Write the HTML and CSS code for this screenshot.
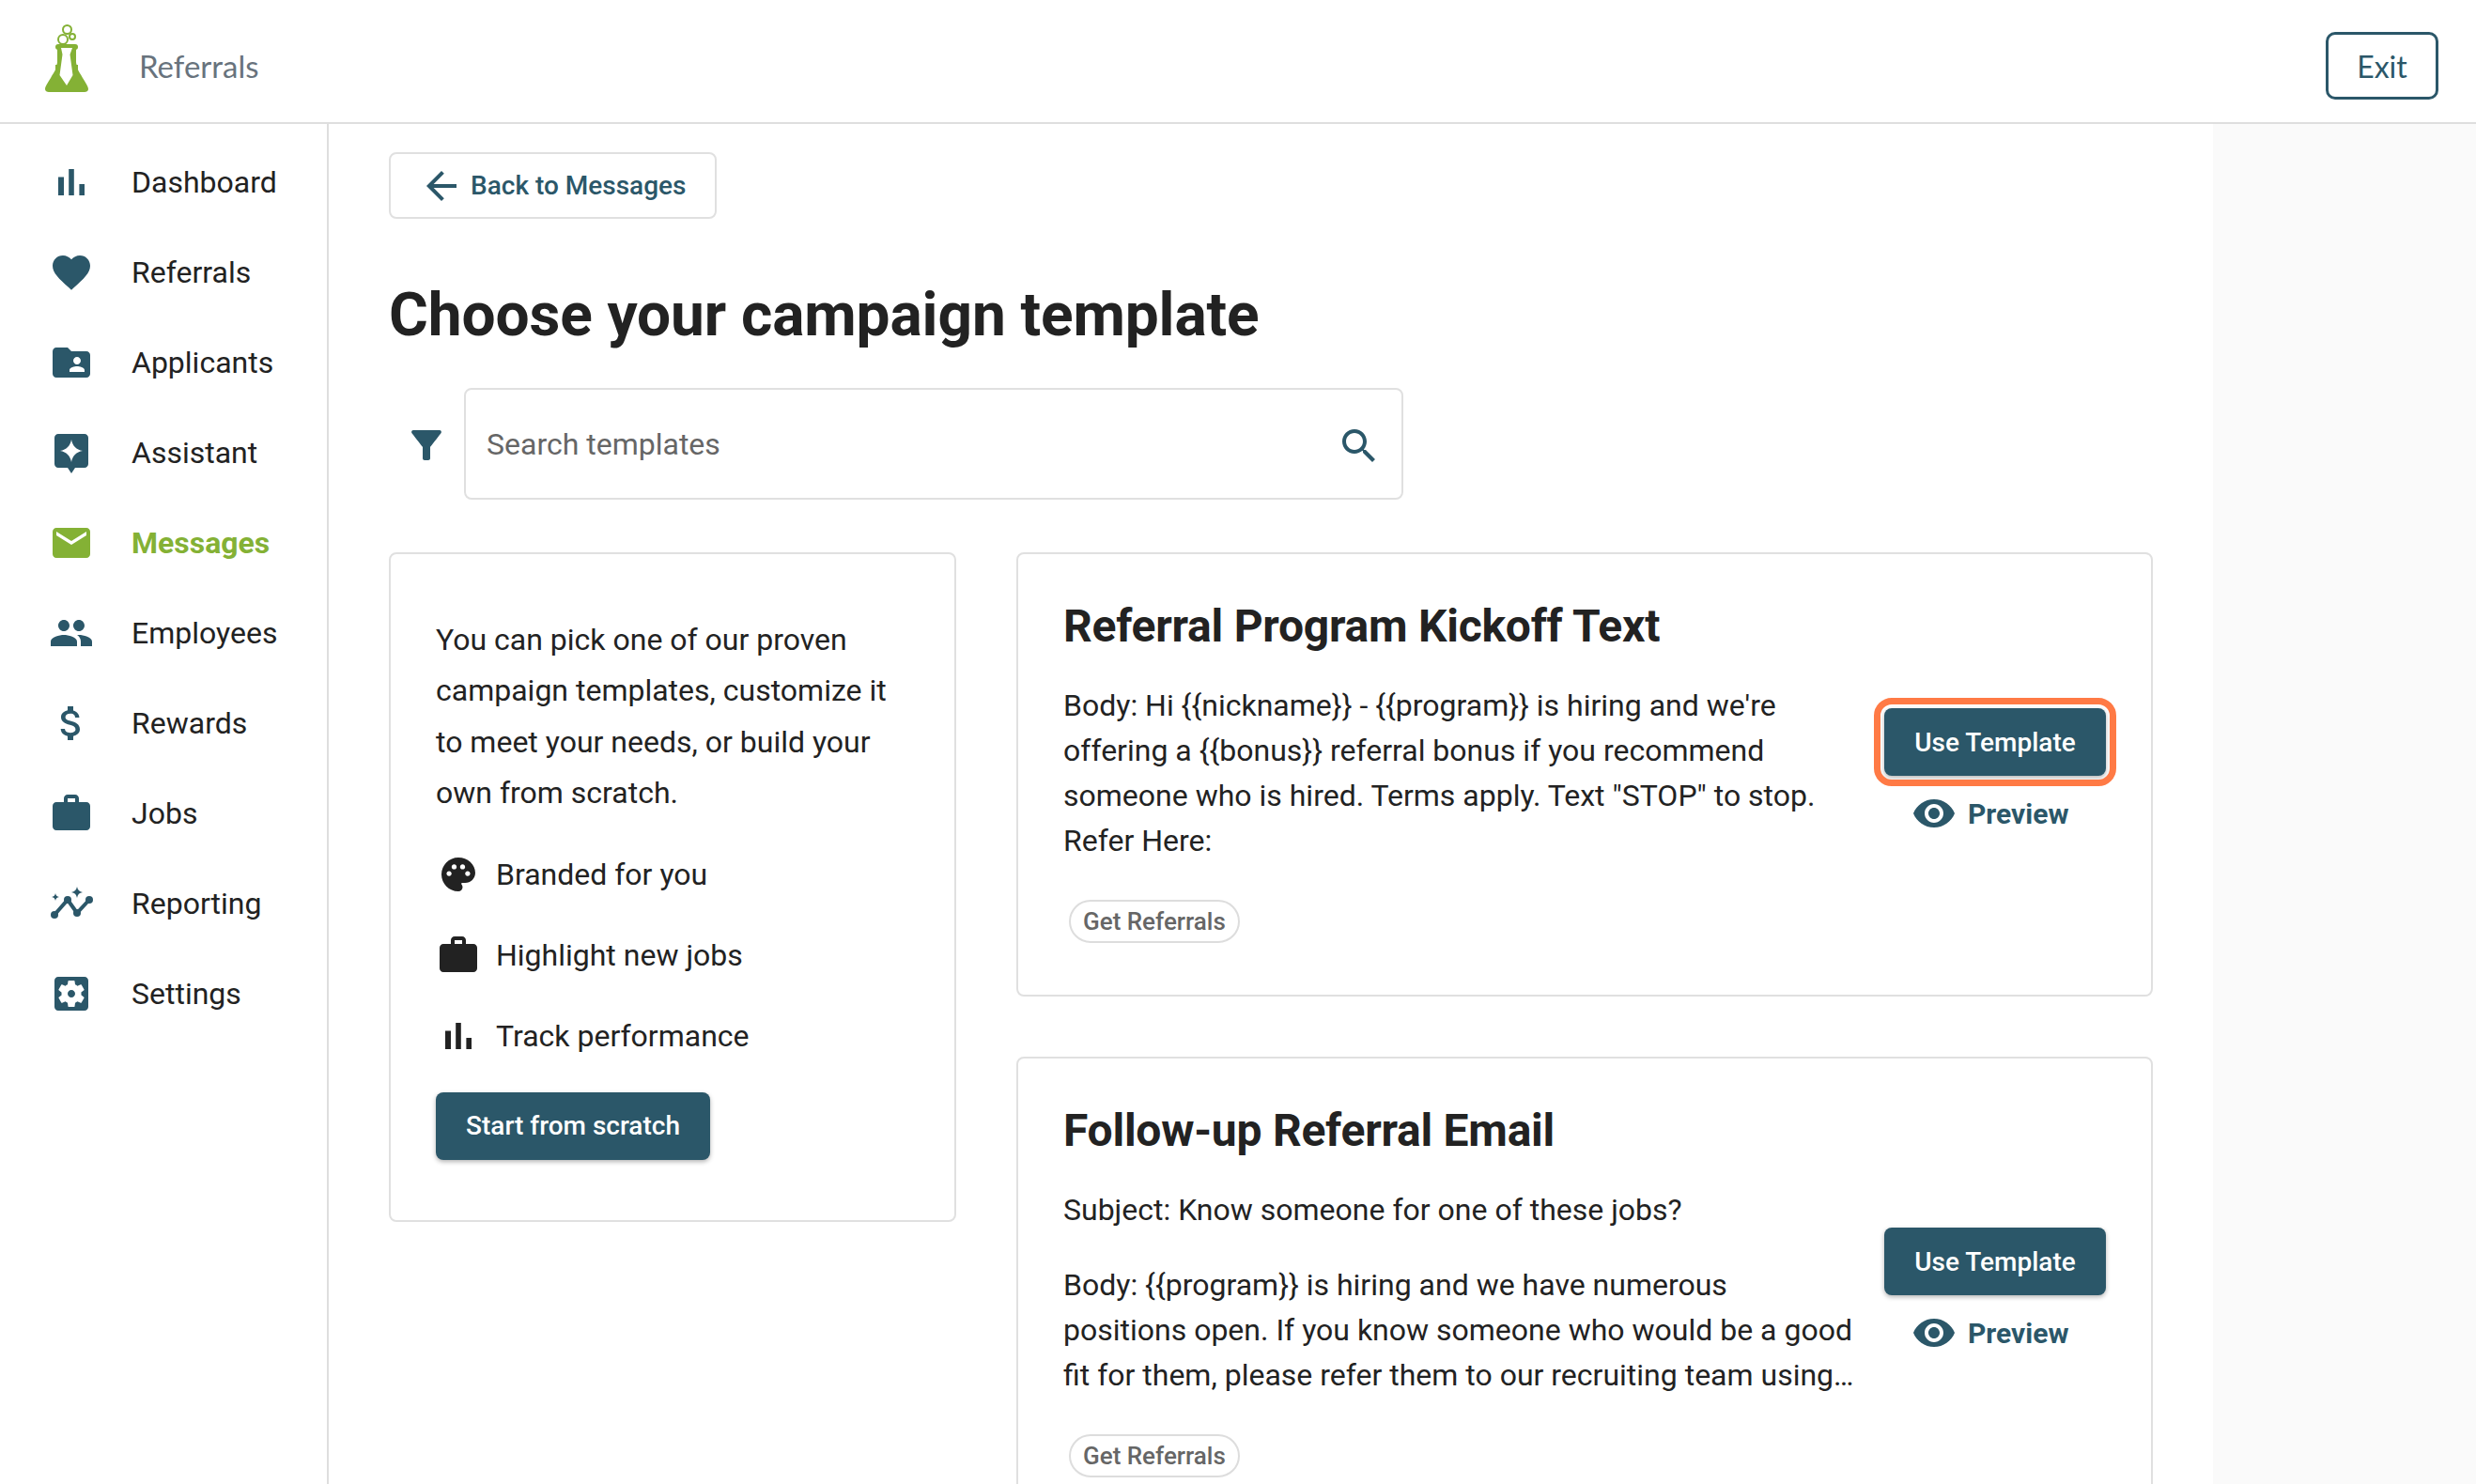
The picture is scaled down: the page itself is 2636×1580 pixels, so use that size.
FILE: index.html
```html
<!DOCTYPE html>
<html>
<head>
    <title>Choose your campaign template</title>
    <meta name="viewport" content="width=device-width" />
    <link rel="stylesheet" href="styles.css">
</head>
<body>

<header class="topbar">
    <div class="brand">
        <svg class="logo" viewBox="0 0 46 72" width="46" height="72">
            <path class="logo-flask" d="M11 43h24v5c0 1 3 5 5 9 3 5 6 9 6 12 0 2-2 3-4 3H4c-2 0-4-1-4-3 0-3 3-7 6-12 2-4 5-8 5-9z"/>
            <path class="logo-flask" d="M13 22h20v18c0 2 1 4 2 6H11c1-2 2-4 2-6z"/>
            <rect class="logo-flask" x="11" y="21" width="24" height="6" rx="3"/>
            <path class="logo-tie" d="M17 25h12l-2.500 7 3 22L23 65l-7.500-11 3-22z"/>
            <circle class="logo-bubble" cx="23.500" cy="5.500" r="4.500"/>
            <circle class="logo-bubble" cx="19" cy="16" r="5"/>
            <circle class="logo-bubble" cx="29" cy="13" r="3"/>
        </svg>
        <span class="brand-name">Referrals</span>
    </div>
    <a class="exit-btn">Exit</a>
</header>

<div class="shell">
    <nav class="sidebar">
        <a class="nav-item">
            <svg class="icon" viewBox="0 0 24 24"><path d="M5 9.200h3V19H5zM10.600 5h2.800v14h-2.800zm5.600 8H19v6h-2.800z"/></svg>
            Dashboard
        </a>
        <a class="nav-item">
            <svg class="icon" viewBox="0 0 24 24"><path d="M12 21.350l-1.450-1.320C5.400 15.360 2 12.280 2 8.500 2 5.420 4.420 3 7.500 3c1.740 0 3.410.81 4.500 2.090C13.090 3.810 14.760 3 16.500 3 19.580 3 22 5.420 22 8.500c0 3.780-3.400 6.860-8.550 11.540L12 21.350z"/></svg>
            Referrals
        </a>
        <a class="nav-item">
            <svg class="icon" viewBox="0 0 24 24"><path d="M20 6h-8l-2-2H4c-1.100 0-1.990.9-1.990 2L2 18c0 1.100.9 2 2 2h16c1.100 0 2-.9 2-2V8c0-1.100-.9-2-2-2zm-5 3c1.100 0 2 .9 2 2s-.9 2-2 2-2-.9-2-2 .9-2 2-2zm4 8h-8v-1c0-1.330 2.670-2 4-2s4 .67 4 2v1z"/></svg>
            Applicants
        </a>
        <a class="nav-item">
            <svg class="icon" viewBox="0 0 24 24"><path fill-rule="evenodd" d="M19 2H5c-1.100 0-2 .9-2 2v14c0 1.100.9 2 2 2h5l2 3 2-3h5c1.100 0 2-.9 2-2V4c0-1.100-.9-2-2-2zM12 5c.6 3.400 2.600 5.400 6 6-3.400.6-5.400 2.600-6 6-.6-3.400-2.600-5.400-6-6 3.400-.6 5.400-2.600 6-6z"/></svg>
            Assistant
        </a>
        <a class="nav-item active">
            <svg class="icon" viewBox="0 0 24 24"><path d="M20 4H4c-1.100 0-1.990.9-1.990 2L2 18c0 1.100.9 2 2 2h16c1.100 0 2-.9 2-2V6c0-1.100-.9-2-2-2zm0 4l-8 5-8-5V6l8 5 8-5v2z"/></svg>
            Messages
        </a>
        <a class="nav-item">
            <svg class="icon" viewBox="0 0 24 24"><path d="M16 11c1.660 0 2.990-1.340 2.990-3S17.660 5 16 5c-1.660 0-3 1.340-3 3s1.340 3 3 3zm-8 0c1.660 0 2.990-1.340 2.990-3S9.660 5 8 5C6.340 5 5 6.340 5 8s1.340 3 3 3zm0 2c-2.330 0-7 1.170-7 3.500V19h14v-2.500c0-2.330-4.670-3.500-7-3.500zm8 0c-.29 0-.62.02-.97.05 1.160.84 1.970 1.970 1.970 3.450V19h6v-2.500c0-2.330-4.670-3.500-7-3.500z"/></svg>
            Employees
        </a>
        <a class="nav-item">
            <svg class="icon" viewBox="0 0 24 24"><path d="M11.800 10.900c-2.270-.59-3-1.200-3-2.150 0-1.090 1.010-1.850 2.700-1.850 1.780 0 2.440.85 2.500 2.100h2.210c-.07-1.720-1.120-3.300-3.210-3.810V3h-3v2.160c-1.940.42-3.500 1.680-3.500 3.610 0 2.310 1.910 3.460 4.700 4.130 2.500.6 3 1.480 3 2.410 0 .69-.49 1.790-2.700 1.790-2.060 0-2.870-.92-2.980-2.100h-2.200c.12 2.190 1.760 3.420 3.680 3.830V21h3v-2.150c1.950-.37 3.500-1.500 3.500-3.550 0-2.840-2.430-3.810-4.700-4.400z"/></svg>
            Rewards
        </a>
        <a class="nav-item">
            <svg class="icon" viewBox="0 0 24 24"><path d="M20 6h-4V4c0-1.110-.89-2-2-2h-4c-1.110 0-2 .89-2 2v2H4c-1.110 0-1.990.89-1.990 2L2 19c0 1.110.89 2 2 2h16c1.110 0 2-.89 2-2V8c0-1.110-.89-2-2-2zm-6 0h-4V4h4v2z"/></svg>
            Jobs
        </a>
        <a class="nav-item">
            <svg class="icon" viewBox="0 0 48 48">
                <path class="trend" d="M6 36l14-16 10 14 13-14"/>
                <circle cx="6" cy="36" r="4"/><circle cx="20" cy="20" r="4"/><circle cx="30" cy="34" r="4"/><circle cx="43" cy="20" r="4"/>
                <path d="M30 6c.6 3.600 2.400 5.400 6 6-3.600.6-5.400 2.400-6 6-.6-3.600-2.400-5.400-6-6 3.600-.6 5.400-2.400 6-6zM7 13c.4 2.400 1.600 3.600 4 4-2.400.4-3.600 1.600-4 4-.4-2.400-1.600-3.600-4-4 2.400-.4 3.600-1.600 4-4z"/>
            </svg>
            Reporting
        </a>
        <a class="nav-item">
            <svg class="icon" viewBox="0 0 24 24"><path d="M12 10c-1.100 0-2 .9-2 2s.9 2 2 2 2-.9 2-2-.9-2-2-2zm7-7H5c-1.110 0-2 .9-2 2v14c0 1.100.89 2 2 2h14c1.110 0 2-.9 2-2V5c0-1.100-.89-2-2-2zm-1.750 9c0 .23-.02.46-.05.68l1.480 1.160c.13.11.17.3.08.45l-1.400 2.420c-.09.15-.27.21-.43.15l-1.740-.7c-.36.28-.76.51-1.180.69l-.26 1.850c-.03.17-.18.3-.35.3h-2.800c-.17 0-.32-.13-.35-.29l-.26-1.850c-.43-.18-.82-.41-1.180-.69l-1.740.7c-.16.06-.34 0-.43-.15l-1.400-2.420c-.09-.15-.05-.34.08-.45l1.480-1.160c-.03-.23-.05-.46-.05-.69 0-.23.02-.46.05-.68l-1.480-1.160c-.13-.11-.17-.3-.08-.45l1.400-2.420c.09-.15.27-.21.43-.15l1.740.7c.36-.28.76-.51 1.180-.69l.26-1.850c.03-.17.18-.3.35-.3h2.800c.17 0 .32.13.35.29l.26 1.850c.43.18.82.41 1.180.69l1.740-.7c.16-.06.34 0 .43.15l1.400 2.420c.09.15.05.34-.08.45l-1.480 1.160c.03.23.05.46.05.69z"/></svg>
            Settings
        </a>
    </nav>

    <main class="main">
        <a class="back-btn">
            <svg class="icon" viewBox="0 0 24 24"><path d="M20 11H7.830l5.590-5.590L12 4l-8 8 8 8 1.410-1.410L7.830 13H20v-2z"/></svg>
            Back to Messages
        </a>

        <h1 class="page-title">Choose your campaign template</h1>

        <div class="search-row">
            <svg class="icon filter-icon" viewBox="0 0 24 24"><path d="M4.250 5.610C6.270 8.200 10 13 10 13v6c0 .55.45 1 1 1h2c.55 0 1-.45 1-1v-6s3.720-4.800 5.740-7.390c.51-.66.04-1.610-.79-1.610H5.040c-.83 0-1.300.95-.79 1.610z"/></svg>
            <div class="search-box">
                <input class="search-input" placeholder="Search templates">
                <svg class="icon search-icon" viewBox="0 0 24 24"><path d="M15.500 14h-.79l-.28-.27C15.410 12.590 16 11.110 16 9.500 16 5.910 13.090 3 9.500 3S3 5.910 3 9.500 5.910 16 9.500 16c1.610 0 3.090-.59 4.230-1.570l.27.28v.79l5 4.990L20.490 19l-4.990-5zm-6 0C7.010 14 5 11.990 5 9.500S7.010 5 9.500 5 14 7.010 14 9.500 11.990 14 9.500 14z"/></svg>
            </div>
        </div>

        <div class="columns">
            <section class="card intro">
                <p class="intro-text">You can pick one of our proven campaign templates, customize it to meet your needs, or build your own from scratch.</p>
                <ul class="perks">
                    <li>
                        <svg class="icon" viewBox="-1.330 -1.330 26.670 26.670"><path d="M12 2C6.490 2 2 6.490 2 12s4.490 10 10 10c1.380 0 2.500-1.120 2.500-2.500 0-.61-.23-1.200-.64-1.670-.08-.1-.13-.21-.13-.33 0-.28.22-.5.5-.5H16c3.310 0 6-2.690 6-6 0-4.960-4.490-9-10-9zm5.500 11c-.83 0-1.500-.67-1.500-1.500s.67-1.500 1.500-1.500 1.500.67 1.500 1.500-.67 1.500-1.500 1.500zm-3-4c-.83 0-1.500-.67-1.500-1.500S13.670 6 14.500 6s1.500.67 1.500 1.500S15.330 9 14.500 9zM5 11.500c0-.83.67-1.500 1.500-1.500s1.500.67 1.500 1.500S7.330 13 6.500 13 5 12.330 5 11.500zm6-4c0 .83-.67 1.500-1.500 1.500S8 8.330 8 7.500 8.670 6 9.500 6s1.500.67 1.500 1.500z"/></svg>
                        Branded for you
                    </li>
                    <li>
                        <svg class="icon" viewBox="0 0 24 24"><path d="M20 6h-4V4c0-1.110-.89-2-2-2h-4c-1.110 0-2 .89-2 2v2H4c-1.110 0-1.990.89-1.990 2L2 19c0 1.110.89 2 2 2h16c1.110 0 2-.89 2-2V8c0-1.110-.89-2-2-2zm-6 0h-4V4h4v2z"/></svg>
                        Highlight new jobs
                    </li>
                    <li>
                        <svg class="icon" viewBox="0 0 24 24"><path d="M5 9.200h3V19H5zM10.600 5h2.800v14h-2.800zm5.600 8H19v6h-2.800z"/></svg>
                        Track performance
                    </li>
                </ul>
                <a class="btn start-btn">Start from scratch</a>
            </section>

            <div class="templates">
                <article class="card template">
                    <h2 class="template-title">Referral Program Kickoff Text</h2>
                    <div class="template-row">
                        <div class="template-body">
                            <p>Body: Hi {{nickname}} - {{program}} is hiring and we're offering a {{bonus}} referral bonus if you recommend someone who is hired. Terms apply. Text "STOP" to stop. Refer Here:</p>
                        </div>
                        <div class="template-actions">
                            <a class="btn use-btn focused">Use Template</a>
                            <a class="preview">
                                <svg class="icon" viewBox="0 0 24 24"><path d="M12 4.500C7 4.500 2.730 7.610 1 12c1.730 4.390 6 7.500 11 7.500s9.270-3.110 11-7.500c-1.730-4.390-6-7.500-11-7.500zM12 17c-2.760 0-5-2.240-5-5s2.240-5 5-5 5 2.240 5 5-2.240 5-5 5zm0-8c-1.660 0-3 1.340-3 3s1.340 3 3 3 3-1.340 3-3-1.340-3-3-3z"/></svg>
                                Preview
                            </a>
                        </div>
                    </div>
                    <span class="tag">Get Referrals</span>
                </article>

                <article class="card template">
                    <h2 class="template-title">Follow-up Referral Email</h2>
                    <div class="template-row">
                        <div class="template-body">
                            <p>Subject: Know someone for one of these jobs?</p>
                            <p>Body: {{program}} is hiring and we have numerous positions open. If you know someone who would be a good fit for them, please refer them to our recruiting team using…</p>
                        </div>
                        <div class="template-actions">
                            <a class="btn use-btn">Use Template</a>
                            <a class="preview">
                                <svg class="icon" viewBox="0 0 24 24"><path d="M12 4.500C7 4.500 2.730 7.610 1 12c1.730 4.390 6 7.500 11 7.500s9.270-3.110 11-7.500c-1.730-4.390-6-7.500-11-7.500zM12 17c-2.760 0-5-2.240-5-5s2.240-5 5-5 5 2.240 5 5-2.240 5-5 5zm0-8c-1.660 0-3 1.340-3 3s1.340 3 3 3 3-1.340 3-3-1.340-3-3-3z"/></svg>
                                Preview
                            </a>
                        </div>
                    </div>
                    <span class="tag">Get Referrals</span>
                </article>
            </div>
        </div>
    </main>

    <aside class="side-panel"></aside>
</div>

</body>
</html>
```

FILE: styles.css
```css
body, html {
    margin: 0;
    height: 100%;
    overflow: hidden;
    font-family: Roboto, sans-serif;
    color: #222;
    background: #fff;
}

.icon {
    width: 48px;
    height: 48px;
    flex: none;
    fill: currentColor;
}

/* top bar */

.topbar {
    height: 130px;
    box-sizing: content-box;
    border-bottom: 2px solid #dedede;
    display: flex;
    align-items: center;
    justify-content: space-between;
    padding: 0 40px 0 48px;
}

.brand {
    display: flex;
    align-items: center;
    gap: 54px;
    padding-top: 10px;
    font-family: Lato, sans-serif;
}

.logo {
    margin-bottom: 16px;
}
.logo-flask {
    fill: #84b135;
}
.logo-tie {
    fill: #fff;
}
.logo-bubble {
    fill: #fff;
    stroke: #84b135;
    stroke-width: 2px;
}

.brand-name {
    font-size: 33px;
    color: #68737d;
}

.exit-btn {
    width: 120px;
    height: 72px;
    margin-top: 10px;
    box-sizing: border-box;
    border: 3px solid #2b5769;
    border-radius: 10px;
    display: flex;
    align-items: center;
    justify-content: center;
    font-family: Lato, sans-serif;
    font-size: 32px;
    color: #2b5769;
}

/* page columns */

.shell {
    display: flex;
    height: calc(100% - 132px);
}

.sidebar {
    width: 348px;
    flex: none;
    border-right: 2px solid #dedede;
    padding-top: 14px;
}

.nav-item {
    height: 96px;
    display: flex;
    align-items: center;
    gap: 40px;
    padding-left: 52px;
    font-size: 32px;
    color: #222;
}
.nav-item .icon {
    color: #2b5769;
}
.trend {
    fill: none;
    stroke: currentColor;
    stroke-width: 4px;
}
.nav-item.active, .nav-item.active .icon {
    color: #84b135;
    font-weight: 700;
}

.main {
    flex: 1;
    padding: 30px 64px 0;
}

.side-panel {
    width: 280px;
    flex: none;
    background: #fafafa;
}

/* heading and search */

.back-btn {
    width: 349px;
    height: 71px;
    box-sizing: border-box;
    border: 2px solid #e0e0e0;
    border-radius: 8px;
    display: flex;
    align-items: center;
    gap: 7px;
    padding-left: 30px;
    font-size: 28px;
    font-weight: 500;
    color: #2b5769;
}

.page-title {
    margin: 65px 0 0;
    font-size: 64px;
    line-height: 75px;
    font-weight: 700;
    letter-spacing: -.12px;
    color: #222;
}

.search-row {
    display: flex;
    align-items: center;
    gap: 16px;
    margin: 40px 0 0 16px;
    color: #2b5769;
}

.filter-icon {
    margin-top: 3px;
}

.search-box {
    width: 1000px;
    height: 119px;
    box-sizing: border-box;
    border: 2px solid #e0e0e0;
    border-radius: 8px;
    display: flex;
    align-items: center;
    padding: 0 21px 0 22px;
}

.search-input {
    flex: 1;
    border: 0;
    outline: 0;
    padding: 0;
    font-family: Roboto, sans-serif;
    font-size: 32px;
    color: #222;
}
.search-input::placeholder {
    color: #666;
    opacity: 1;
}

.search-icon {
    margin-top: 5px;
}

/* cards */

.columns {
    display: grid;
    grid-template-columns: 604px 1210px;
    gap: 64px;
    align-items: start;
    margin-top: 56px;
}

.card {
    box-sizing: border-box;
    border: 2px solid #e0e0e0;
    border-radius: 8px;
    background: #fff;
}

.intro {
    padding: 64px 48px 64px;
}

.intro-text {
    margin: 0;
    font-size: 32px;
    line-height: 54.400px;
}

.perks {
    list-style: none;
    margin: 16px 0 0;
    padding: 0;
}
.perks li {
    height: 86px;
    display: flex;
    align-items: center;
    gap: 16px;
    font-size: 32px;
}

.btn {
    display: flex;
    align-items: center;
    justify-content: center;
    height: 72px;
    border-radius: 8px;
    background: #2b5769;
    color: #fff;
    font-size: 28px;
    font-weight: 500;
    box-shadow: 0 2px 5px rgba(0, 0, 0, .3);
}

.start-btn {
    width: 292px;
    margin-top: 17px;
}

.templates {
    display: flex;
    flex-direction: column;
    gap: 64px;
}

.template {
    padding: 48px 48px 55px;
}

.template-title {
    margin: 1px 0 0;
    font-size: 48px;
    line-height: 56px;
    font-weight: 700;
    letter-spacing: -.25px;
}

.template-row {
    display: flex;
    align-items: center;
    justify-content: space-between;
    margin: 32px 0 39px;
}

.template-body {
    width: 844px;
    font-size: 32px;
    line-height: 48px;
}
.template-body p {
    margin: 0 0 32px;
}
.template-body p:last-child {
    margin-bottom: 0;
}

.template-actions {
    width: 236px;
    display: flex;
    flex-direction: column;
    gap: 16px;
}

.use-btn.focused {
    outline: 7px solid #ff7a45;
    outline-offset: 4px;
}

.preview {
    height: 48px;
    margin-bottom: 2px;
    display: flex;
    align-items: center;
    gap: 12px;
    padding-left: 29px;
    font-size: 30px;
    font-weight: 700;
    color: #2b5769;
}

.tag {
    display: inline-block;
    margin-left: 6px;
    padding: 0 13px;
    height: 46px;
    line-height: 42px;
    box-sizing: border-box;
    border: 2px solid #ddd;
    border-radius: 23px;
    font-size: 26px;
    font-weight: 500;
    color: #666;
}
```
